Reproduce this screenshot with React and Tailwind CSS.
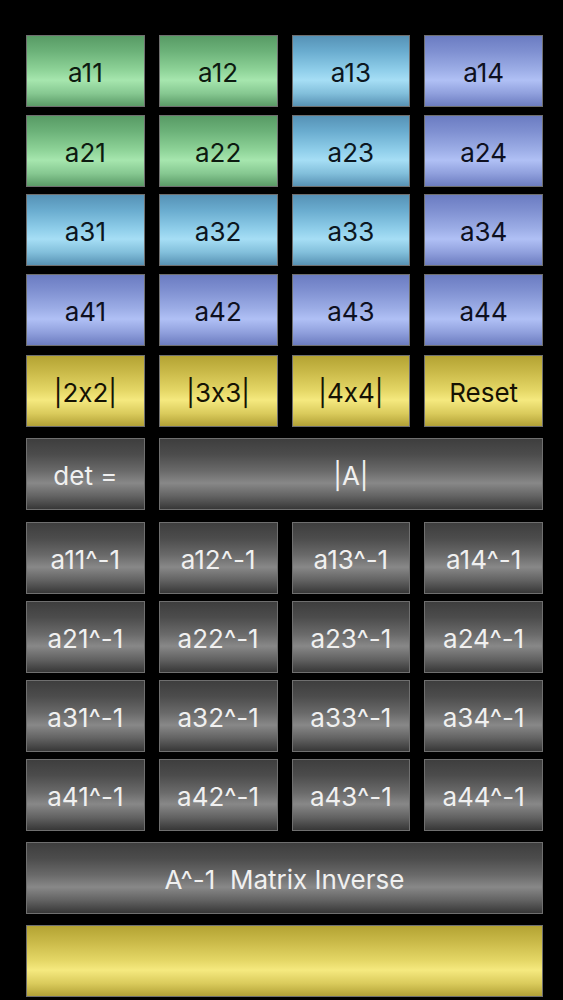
const GREEN =
  "bg-[linear-gradient(180deg,#589b65_0%,#6cb279_22%,#8dd297_48%,#a6e6ae_63%,#86c891_82%,#5b9b67_100%)] text-[#0d1a10]";
const CYAN =
  "bg-[linear-gradient(180deg,#5692b6_0%,#6aaccf_22%,#8ecde9_48%,#a6def5_63%,#82bfdb_82%,#5892b4_100%)] text-[#0c1620]";
const VIOLET =
  "bg-[linear-gradient(180deg,#6b7cc2_0%,#7f90d1_22%,#9cade6_48%,#b0c0f5_63%,#90a0dd_82%,#6c7cc0_100%)] text-[#0e1020]";
const YELLOW =
  "bg-[linear-gradient(180deg,#b4a333_0%,#c9b948_22%,#e3d564_48%,#f5e97f_63%,#dacb5c_82%,#b2a136_100%)] text-[#151203]";
const GRAY =
  "bg-[linear-gradient(180deg,#3e3e3e_0%,#4c4c4c_22%,#6a6a6a_46%,#888888_63%,#626262_82%,#373737_100%)] text-[#f0f0f0]";

const matrixColors = [
  [GREEN, GREEN, CYAN, VIOLET],
  [GREEN, GREEN, CYAN, VIOLET],
  [CYAN, CYAN, CYAN, VIOLET],
  [VIOLET, VIOLET, VIOLET, VIOLET],
];

function Key({ label, tone, className = "" }) {
  return (
    <div
      className={`flex h-[72px] items-center justify-center whitespace-pre border border-[#6f6f6f] pt-[3px] text-[26px] ${tone} ${className}`}
    >
      {label}
    </div>
  );
}

export default function App() {
  const cells = [1, 2, 3, 4];
  return (
    <div
      className="min-h-[1000px] w-[563px] bg-black pl-[26px] pr-[20px] pt-[35px] [font-feature-settings:'calt'_0]"
      style={{ fontFamily: "Inter, 'Liberation Sans', sans-serif" }}
    >
      {/* Matrix entries */}
      <div className="grid grid-cols-4 gap-x-[14px] gap-y-[7.5px]">
        {cells.map((r) =>
          cells.map((c) => (
            <Key key={`a${r}${c}`} label={`a${r}${c}`} tone={matrixColors[r - 1][c - 1]} />
          ))
        )}
      </div>

      {/* Determinant size buttons */}
      <div className="mt-[9px] grid grid-cols-4 gap-x-[14px]">
        <Key label="|2x2|" tone={YELLOW} />
        <Key label="|3x3|" tone={YELLOW} />
        <Key label="|4x4|" tone={YELLOW} />
        <Key label="Reset" tone={YELLOW} />
      </div>

      {/* Determinant display */}
      <div className="mt-[11px] grid grid-cols-4 gap-x-[14px]">
        <Key label="det =" tone={GRAY} />
        <Key label="|A|" tone={GRAY} className="col-span-3" />
      </div>

      {/* Inverse entries */}
      <div className="mt-[12px] grid grid-cols-4 gap-x-[14px] gap-y-[7px]">
        {cells.map((r) =>
          cells.map((c) => (
            <Key key={`i${r}${c}`} label={`a${r}${c}^-1`} tone={GRAY} />
          ))
        )}
      </div>

      <div className="mt-[11px]">
        <Key label="A^-1  Matrix Inverse" tone={GRAY} />
      </div>

      <div className="mt-[11px]">
        <Key label="" tone={YELLOW} />
      </div>
    </div>
  );
}
